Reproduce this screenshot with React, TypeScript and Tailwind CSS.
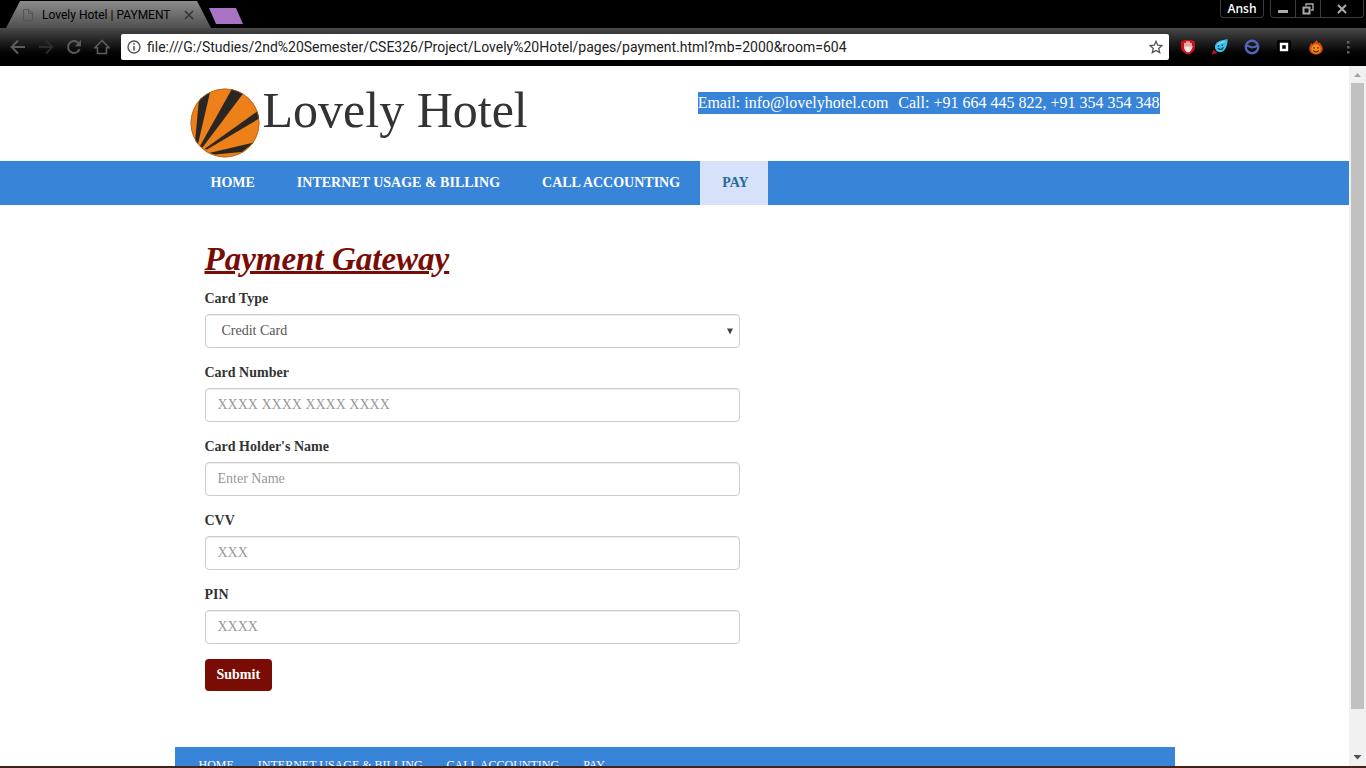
import React from "react";

const NAV = ["HOME", "INTERNET USAGE & BILLING", "CALL ACCOUNTING", "PAY"];

const FIELDS = [
  { id: "number", label: "Card Number", placeholder: "XXXX XXXX XXXX XXXX" },
  { id: "holder", label: "Card Holder's Name", placeholder: "Enter Name" },
  { id: "cvv", label: "CVV", placeholder: "XXX" },
  { id: "pin", label: "PIN", placeholder: "XXXX" },
];

const CONTROL =
  "block h-[34px] w-full appearance-none rounded border border-[#ccc] bg-white px-3 text-sm text-[#555] shadow-[inset_0_1px_1px_rgba(0,0,0,0.075)] placeholder:text-[#999] outline-none focus:border-[#66afe9]";

function TitleBar() {
  return (
    <div className="flex h-7 items-start justify-between bg-black">
      <div className="flex h-7 items-end pl-[6px]">
        <div className="flex h-[27px] w-[205px] items-center bg-linear-to-b from-[#8c8c8c] to-[#505050] pl-4 pr-[17px] [clip-path:polygon(14px_0,191px_0,100%_100%,0_100%)]">
          <svg width="12" height="14" viewBox="0 0 12 14" fill="none" stroke="#555" aria-hidden="true">
            <path d="M1.5 1.500h5.500l3.500 3.500v7.500h-9zM6.500 1.500v4h4" />
          </svg>
          <span className="ml-2 flex-1 whitespace-nowrap text-xs text-black">Lovely Hotel | PAYMENT</span>
          <button type="button" aria-label="Close tab">
            <svg width="10" height="10" viewBox="0 0 10 10" stroke="#333" strokeWidth="1.5">
              <path d="M1 1l8 8M9 1L1 9" />
            </svg>
          </button>
        </div>
        <button
          type="button"
          aria-label="New tab"
          className="mb-1 -ml-0.5 h-4 w-[34px] bg-[#a873c4] [clip-path:polygon(0_0,27px_0,100%_100%,7px_100%)]"
        />
      </div>
      <div className="flex gap-[6px] pr-0.5 text-[#aaa]">
        <button type="button" className="h-[18px] w-11 rounded-b border border-t-0 border-[#3c3c3c] font-['Open_Sans',sans-serif] text-xs leading-4 font-semibold text-white">
          Ansh
        </button>
        <div className="flex h-[18px] divide-x divide-[#3c3c3c] rounded-b border border-t-0 border-[#3c3c3c]">
          <button type="button" aria-label="Minimize" className="flex w-[25px] items-center justify-center">
            <svg width="12" height="12" viewBox="0 0 12 12">
              <path d="M1 7h10v3H1z" fill="currentColor" />
            </svg>
          </button>
          <button type="button" aria-label="Restore" className="flex w-[25px] items-center justify-center">
            <svg width="12" height="12" viewBox="0 0 12 12" fill="none" stroke="currentColor">
              <path d="M4 3V1h7v6H9" strokeWidth="1.400" />
              <path d="M1.500 4.500h6v6h-6z" strokeWidth="2" />
            </svg>
          </button>
          <button type="button" aria-label="Close" className="flex w-[42px] items-center justify-center">
            <svg width="10" height="10" viewBox="0 0 10 10" stroke="currentColor" strokeWidth="2">
              <path d="M1 1l8 8M9 1L1 9" />
            </svg>
          </button>
        </div>
      </div>
    </div>
  );
}

function Toolbar() {
  return (
    <div className="flex h-[38px] items-center bg-linear-to-b from-[#4a4a4a] to-black to-90% pl-[10px] pr-[10px]">
      <div className="flex w-[111px] items-center gap-3 text-[#5c5c5c]">
        <button type="button" aria-label="Back">
          <svg width="16" height="16" viewBox="0 0 16 16" fill="none" stroke="currentColor" strokeWidth="2">
            <path d="M15 8H2M8 1.500L1.700 8 8 14.500" />
          </svg>
        </button>
        <button type="button" aria-label="Forward" className="text-[#2c2c2c]">
          <svg width="16" height="16" viewBox="0 0 16 16" fill="none" stroke="currentColor" strokeWidth="2">
            <path d="M1 8h13M8 1.500L14.300 8 8 14.500" />
          </svg>
        </button>
        <button type="button" aria-label="Reload">
          <svg width="16" height="16" viewBox="0 0 16 16" fill="none" stroke="currentColor" strokeWidth="2">
            <path d="M13.600 10.200A6 6 0 1 1 12.300 3.800" />
            <path d="M15 1v6.200H8.800z" fill="currentColor" stroke="none" />
          </svg>
        </button>
        <button type="button" aria-label="Home">
          <svg width="16" height="16" viewBox="0 0 16 16" fill="none" stroke="currentColor" strokeWidth="1.600">
            <path d="M8 1.500L1 8.700h2.500v5.800h9V8.700H15z" />
          </svg>
        </button>
      </div>
      <div className="flex h-[26px] min-w-0 flex-1 items-center rounded-xs bg-white px-[6px]">
        <svg width="14" height="14" viewBox="0 0 14 14" fill="none" stroke="#555" strokeWidth="1.400" aria-hidden="true">
          <circle cx="7" cy="7" r="6" />
          <path d="M7 6v4.500M7 3.300v1.500" strokeWidth="1.600" />
        </svg>
        <input
          aria-label="Address"
          defaultValue="file:///G:/Studies/2nd%20Semester/CSE326/Project/Lovely%20Hotel/pages/payment.html?mb=2000&room=604"
          className="ml-[6px] min-w-0 flex-1 bg-transparent text-sm text-[#222] outline-none"
        />
        <button type="button" aria-label="Bookmark this page">
          <svg width="14" height="14" viewBox="0 0 14 14" fill="none" stroke="#555" strokeWidth="1.300">
            <path d="M7 1.300l1.700 3.900 4.200.4-3.200 2.800 1 4.200L7 10.400l-3.700 2.200 1-4.200L1.100 5.600l4.200-.4z" />
          </svg>
        </button>
      </div>
      <div className="ml-[11px] flex items-center gap-4">
        <button type="button" aria-label="Ad blocker">
          <svg width="16" height="16" viewBox="0 0 16 16">
            <path d="M4.500 1h7L15 2.500v6C15 12 11.500 14.300 8 15.500 4.500 14.300 1 12 1 8.500v-6z" fill="#c9121c" />
            <path d="M5 9V4.500M7 8V2.800M9 8V3M11 9V4.500" stroke="#f6e4e4" strokeWidth="1.400" strokeLinecap="round" />
            <path d="M4.300 7.500h7.400l1.200-.5-1.700 4.300L9.500 13.200H7L4.700 11z" fill="#f6e4e4" />
          </svg>
        </button>
        <button type="button" aria-label="Rocket drop">
          <svg width="16" height="16" viewBox="0 0 16 16">
            <path d="M0 15.500l1.500-5 4 3.500z" fill="#c4151b" />
            <path d="M15.700.3C9.500.8 3.500 2.600 3 7.300c-.4 3.200 2 6 5 6 5 0 7.400-6 7.700-13z" fill="#39bfe9" />
            <path d="M14 2c-4 .5-8 2-8.800 4.500C8 4 11 4 14 2z" fill="#a5ecfb" />
            <path d="M6.500 6.200v1.500M10.300 5.500v1.500M6 9.200c1.700 2 4.700 1.300 5.400-1" stroke="#123a55" strokeWidth="1.200" fill="none" />
          </svg>
        </button>
        <button type="button" aria-label="Web proxy">
          <svg width="16" height="16" viewBox="0 0 16 16" fill="none" stroke="#5066b8">
            <circle cx="8" cy="8" r="6.200" strokeWidth="2.400" />
            <path d="M2 7.500C4 5.500 6 8.500 8 8.500s4-1 6-2" strokeWidth="2.200" />
          </svg>
        </button>
        <button type="button" aria-label="Square">
          <svg width="16" height="16" viewBox="0 0 16 16">
            <path d="M1 1h14v14H1z" fill="#000" />
            <path d="M5 5h6v6H5z" fill="none" stroke="#fff" strokeWidth="2.400" />
          </svg>
        </button>
        <button type="button" aria-label="Flame">
          <svg width="16" height="16" viewBox="0 0 16 16">
            <path d="M8.500.5c.3 2 1.500 2.500 2.500 3.800l1-1c0 2 2.800 3.500 2.800 6.200 0 3.500-3 6-6.800 6s-6.800-2.500-6.800-6c0-2.500 1.700-3.500 2-5.500l1.300 1.200C5.500 3.500 8 3 8.500.5z" fill="#dd4714" />
            <circle cx="8" cy="10" r="4.700" fill="#f0921a" />
            <path d="M6 8v1.700M10 8v1.700M5.200 11.300c1.300 2 4.300 2 5.600 0" stroke="#5a2508" strokeWidth="1.300" fill="none" />
          </svg>
        </button>
        <button type="button" aria-label="Menu">
          <svg width="16" height="16" viewBox="0 0 16 16" fill="#606060">
            <path d="M7 2h2.500v2.500H7zM7 7h2.500v2.500H7zM7 12h2.500v2.500H7z" />
          </svg>
        </button>
      </div>
    </div>
  );
}

function Logo() {
  return (
    <svg width="70" height="70" viewBox="0 0 70 70" className="shrink-0" role="img" aria-label="Lovely Hotel logo">
      <defs>
        <clipPath id="disc">
          <circle cx="35" cy="35" r="34.500" />
        </clipPath>
      </defs>
      <g clipPath="url(#disc)">
        <path d="M0 0h70v70H0z" fill="#ee8019" />
        <g fill="#2a2622">
          <path d="M5 54L10 0H21L8 56z" />
          <path d="M10 58L43 -1 55 3 12.500 59.500z" />
          <path d="M14.500 61L70 21.500V30L17 61.500z" />
          <path d="M19 65L64 54.500 52 64 25 66.500z" />
        </g>
      </g>
      <circle cx="35" cy="35" r="34" fill="none" stroke="#a8622a" strokeWidth="0.700" />
    </svg>
  );
}

function Scrollbar() {
  return (
    <div aria-hidden="true" className="flex w-[17px] shrink-0 flex-col items-center bg-[#f1f1f1]">
      <svg width="17" height="17" viewBox="0 0 17 17">
        <path d="M5 11l3.500-4 3.500 4z" fill="#a3a3a3" />
      </svg>
      <div className="flex min-h-0 w-full flex-1 flex-col px-0.5">
        <div className="h-[94%] w-full bg-[#c1c1c1]" />
      </div>
      <svg width="17" height="17" viewBox="0 0 17 17">
        <path d="M4.500 6l4 4.500 4-4.500z" fill="#505050" />
      </svg>
    </div>
  );
}

export default function App() {
  return (
    <div className="flex h-screen flex-col overflow-hidden bg-white font-[Roboto,'Noto_Sans',sans-serif]">
      <TitleBar />
      <Toolbar />
      <div className="flex min-h-0 flex-1">
        <div className="min-w-0 flex-1 overflow-y-auto font-['Liberation_Serif',serif] text-sm text-[#333] [scrollbar-width:none]">
          <header className="mx-auto flex h-[95px] w-full max-w-[1000px] items-start justify-between pl-[15px] pr-[15px]">
            <div className="flex items-start gap-[3px] pt-[22px]">
              <Logo />
              <span className="-mt-2 text-[50px] leading-[60px] whitespace-nowrap">Lovely Hotel</span>
            </div>
            <p className="mt-[26px] flex gap-[10px] bg-[#3884d9] text-base leading-[22px] whitespace-nowrap text-white">
              <span>Email: info@lovelyhotel.com</span>
              <span>Call: +91 664 445 822, +91 354 354 348</span>
            </p>
          </header>
          <nav className="bg-[#3884d9]">
            <ul className="mx-auto flex w-full max-w-[1000px] pl-[14px] font-bold">
              {NAV.map((item) => (
                <li key={item}>
                  <a
                    href="#"
                    className={
                      item === "PAY"
                        ? "block bg-[#d8e1fa] py-3 pr-[19px] pl-[22px] whitespace-nowrap text-[#1f6b9a]"
                        : "block py-3 pr-5 pl-[22px] whitespace-nowrap text-white"
                    }
                  >
                    {item}
                  </a>
                </li>
              ))}
            </ul>
          </nav>
          <main className="mx-auto w-full max-w-[1000px] px-[30px] pt-[34px] pb-14">
            <h1 className="mb-[10px] text-[33px] leading-10 font-bold text-[#7a0c06] italic underline decoration-3 underline-offset-1">
              Payment Gateway
            </h1>
            <form className="max-w-[535px]" onSubmit={(e) => e.preventDefault()}>
              <div className="mb-[15px]">
                <label htmlFor="type" className="mb-[5px] block font-bold">
                  Card Type
                </label>
                <div className="grid items-center">
                  <select id="type" className={CONTROL + " col-start-1 row-start-1 pl-4"}>
                    <option>Credit Card</option>
                    <option>Debit Card</option>
                  </select>
                  <svg width="6" height="7" viewBox="0 0 6 7" aria-hidden="true" className="pointer-events-none col-start-1 row-start-1 mr-[7px] justify-self-end">
                    <path d="M0 .5h6L3 6.500z" fill="#444" />
                  </svg>
                </div>
              </div>
              {FIELDS.map((f) => (
                <div key={f.id} className="mb-[15px]">
                  <label htmlFor={f.id} className="mb-[5px] block font-bold">
                    {f.label}
                  </label>
                  <input id={f.id} type="text" placeholder={f.placeholder} className={CONTROL} />
                </div>
              ))}
              <button type="submit" className="block rounded bg-[#7a0c06] px-3 py-[6px] font-bold text-white">
                Submit
              </button>
            </form>
          </main>
          <footer className="mx-auto w-full max-w-[1000px] bg-[#3884d9] px-6 pt-[9px] pb-6">
            <ul className="flex gap-6 text-xs leading-[18px] text-white">
              {NAV.map((item) => (
                <li key={item}>
                  <a href="#">{item}</a>
                </li>
              ))}
            </ul>
          </footer>
        </div>
        <Scrollbar />
      </div>
      <div className="h-0.5 bg-[#45211a]" />
    </div>
  );
}
